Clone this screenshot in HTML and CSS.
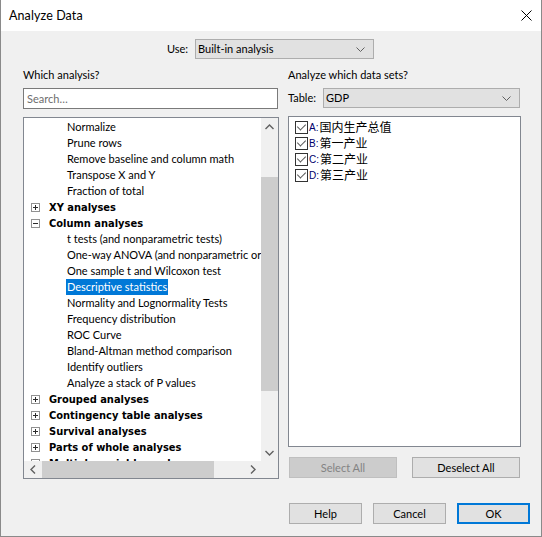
FILE: index.html
```html
<!DOCTYPE html>
<html>
<head>
<meta charset="utf-8">
<link rel="stylesheet" href="styles.css">
</head>
<body>
<div class="window">
  <div class="titlebar">
    <span class="title">Analyze Data</span>
    <span class="close"><svg width="11" height="11" viewBox="0 0 11 11"><path d="M0.5 0.5L10.5 10.5M10.5 0.5L0.5 10.5" stroke="#000" stroke-width="1"/></svg></span>
  </div>
  <div class="content">
    <div class="use-row">
      <span class="lbl">Use:</span>
      <div class="combo combo-use"><span>Built-in analysis</span><svg class="chev" width="9" height="5" viewBox="0 0 9 5"><path d="M0.5 0.5L4.5 4.5L8.5 0.5" fill="none" stroke="#606060"/></svg></div>
    </div>
    <div class="columns">
      <div class="col-left">
        <div class="lbl head">Which analysis?</div>
        <div class="search">Search…</div>
        <div class="tree-box">
          <div class="tree">
            <div class="row child"><span>Normalize</span></div>
            <div class="row child"><span>Prune rows</span></div>
            <div class="row child"><span>Remove baseline and column math</span></div>
            <div class="row child"><span>Transpose X and Y</span></div>
            <div class="row child"><span>Fraction of total</span></div>
            <div class="row parent"><i class="pm plus"></i><b>XY analyses</b></div>
            <div class="row parent"><i class="pm minus"></i><b>Column analyses</b></div>
            <div class="row child"><span>t tests (and nonparametric tests)</span></div>
            <div class="row child"><span>One-way ANOVA (and nonparametric or</span></div>
            <div class="row child"><span>One sample t and Wilcoxon test</span></div>
            <div class="row child"><span class="sel">Descriptive statistics</span></div>
            <div class="row child"><span>Normality and Lognormality Tests</span></div>
            <div class="row child"><span>Frequency distribution</span></div>
            <div class="row child"><span>ROC Curve</span></div>
            <div class="row child"><span>Bland-Altman method comparison</span></div>
            <div class="row child"><span>Identify outliers</span></div>
            <div class="row child"><span>Analyze a stack of P values</span></div>
            <div class="row parent"><i class="pm plus"></i><b>Grouped analyses</b></div>
            <div class="row parent"><i class="pm plus"></i><b>Contingency table analyses</b></div>
            <div class="row parent"><i class="pm plus"></i><b>Survival analyses</b></div>
            <div class="row parent"><i class="pm plus"></i><b>Parts of whole analyses</b></div>
            <div class="row parent"><i class="pm plus"></i><b>Multiple variable analyses</b></div>
          </div>
          <div class="vscroll">
            <div class="sbtn"><svg width="9" height="6" viewBox="0 0 9 6"><path d="M0.5 5L4.5 1L8.5 5" fill="none" stroke="#606060" stroke-width="1.4"/></svg></div>
            <div class="vthumb"></div>
            <div class="spacer"></div>
            <div class="sbtn"><svg width="9" height="6" viewBox="0 0 9 6"><path d="M0.5 1L4.5 5L8.5 1" fill="none" stroke="#606060" stroke-width="1.4"/></svg></div>
          </div>
          <div class="hscroll">
            <div class="sbtn"><svg width="6" height="9" viewBox="0 0 6 9"><path d="M5 0.5L1 4.5L5 8.5" fill="none" stroke="#606060" stroke-width="1.4"/></svg></div>
            <div class="hthumb"></div>
            <div class="spacer"></div>
            <div class="sbtn"><svg width="6" height="9" viewBox="0 0 6 9"><path d="M1 0.5L5 4.5L1 8.5" fill="none" stroke="#606060" stroke-width="1.4"/></svg></div>
          </div>
          <div class="corner"></div>
        </div>
      </div>
      <div class="col-right">
        <div class="lbl head">Analyze which data sets?</div>
        <div class="table-row">
          <span class="lbl tlbl">Table:</span>
          <div class="combo combo-table"><span>GDP</span><svg class="chev" width="9" height="5" viewBox="0 0 9 5"><path d="M0.5 0.5L4.5 4.5L8.5 0.5" fill="none" stroke="#606060"/></svg></div>
        </div>
        <div class="data-box">
          <div class="drow"><i class="cb"></i><span class="key">A:</span><span class="zh">国内生产总值</span></div>
          <div class="drow"><i class="cb"></i><span class="key">B:</span><span class="zh">第一产业</span></div>
          <div class="drow"><i class="cb"></i><span class="key">C:</span><span class="zh">第二产业</span></div>
          <div class="drow"><i class="cb"></i><span class="key">D:</span><span class="zh">第三产业</span></div>
        </div>
        <div class="sel-buttons">
          <div class="btn disabled">Select All</div>
          <div class="btn">Deselect All</div>
        </div>
      </div>
    </div>
    <div class="footer">
      <div class="btn small">Help</div>
      <div class="btn small">Cancel</div>
      <div class="btn small default">OK</div>
    </div>
  </div>
</div>
</body>
</html>
```

FILE: styles.css
```css
* { box-sizing: border-box; }
html, body { margin: 0; padding: 0; }
body { font-family: Lato, "Noto Sans", "Liberation Sans", sans-serif; font-size: 11px; color: #000; }

.window {
  width: 542px; height: 537px;
  border: 1px solid #8a8a8a; border-top: none;
  background: #f0f0f0;
  display: flex; flex-direction: column;
}
.titlebar {
  height: 31px; background: #fff;
  display: flex; align-items: center; justify-content: space-between;
  padding: 0 9px 0 8px;
}
.title { font-size: 12.5px; letter-spacing: 0.1px; }
.close { display: flex; width: 11px; height: 11px; }

.content { flex: 1; display: flex; flex-direction: column; padding: 0 11px 0 22px; }
.lbl { line-height: 16px; white-space: nowrap; }

.use-row { display: flex; align-items: center; justify-content: center; gap: 7px; margin-top: 8px; margin-left: -12px; }
.combo {
  height: 20px; background: #e1e1e1; border: 1px solid #adadad;
  display: flex; align-items: center; justify-content: space-between;
  padding: 0 8px 0 2px; line-height: 16px;
}
.combo-use { width: 179px; }
.combo-table { width: 197px; flex: none; }
.chev { flex: none; }

.columns { display: flex; gap: 9px; margin-top: 8px; }
.col-left { width: 256px; display: flex; flex-direction: column; }
.col-right { width: 233px; display: flex; flex-direction: column; }
.head { height: 21px; }

.search {
  height: 21px; background: #fff; border: 1px solid #7a7a7a;
  padding: 0 3px; line-height: 19px; color: #6d6d6d; width: 255px;
}

.tree-box {
  margin-top: 8px; width: 256px; height: 362px;
  border: 1px solid #828790; background: #fff;
  display: grid; grid-template-columns: 1fr 17px; grid-template-rows: 1fr 17px;
}
.tree { overflow: hidden; padding-top: 1px; }
.row { height: 16px; display: flex; align-items: center; white-space: nowrap; }
.row.child { padding-left: 42px; }
.row.child span { padding: 0 1px; line-height: 16px; }
.row .sel { background: #0078d7; color: #fff; }
.row.parent { padding-left: 7px; }
.row.parent b { font-family: "DejaVu Sans Condensed", "DejaVu Sans", sans-serif; font-stretch: condensed; font-weight: bold; font-size: 11px; margin-left: 9px; }
.pm { display: block; width: 9px; height: 9px; border: 1px solid #919191; position: relative; flex: none; }
.pm::before { content: ""; position: absolute; left: 1px; top: 3px; width: 5px; height: 1px; background: #2b2b2b; }
.pm.plus::after { content: ""; position: absolute; left: 3px; top: 1px; width: 1px; height: 5px; background: #2b2b2b; }

.vscroll { background: #f0f0f0; display: flex; flex-direction: column; }
.hscroll { background: #f0f0f0; display: flex; }
.corner { background: #f0f0f0; }
.sbtn { width: 17px; height: 17px; flex: none; display: flex; align-items: center; justify-content: center; }
.vthumb { width: 17px; height: 214px; margin-top: 42px; background: #cdcdcd; flex: none; }
.hthumb { height: 17px; width: 172px; margin-left: 1px; background: #cdcdcd; flex: none; }
.spacer { flex: 1; }

.table-row { display: flex; align-items: center; }
.tlbl { width: 35px; }
.data-box {
  margin-top: 8px; width: 233px; height: 331px;
  border: 1px solid #828790; background: #fff; padding: 2px 0 0 6px;
}
.drow { height: 16px; display: flex; align-items: center; white-space: nowrap; }
.cb { display: block; width: 13px; height: 13px; border: 1px solid #333; background: #fff; position: relative; flex: none; margin-right: 1px; }
.cb::after { content: ""; position: absolute; left: 3px; top: 0px; width: 4px; height: 7px; border-right: 1.5px solid #555; border-bottom: 1.5px solid #555; transform: rotate(45deg); }
.key { font-family: "Liberation Sans", sans-serif; font-size: 10px; color: #00006a; }
.zh { font-family: "Noto Sans CJK SC", sans-serif; font-size: 12px; line-height: 16px; margin-left: 1px; }

.sel-buttons { display: flex; gap: 15px; margin-top: 10px; padding-left: 1px; }
.btn {
  height: 21px; width: 108px; background: #e1e1e1; border: 1px solid #adadad;
  display: flex; align-items: center; justify-content: center; line-height: 16px;
}
.btn.disabled { background: #cccccc; border-color: #bfbfbf; color: #838383; }
.footer { display: flex; justify-content: flex-end; gap: 11px; margin-top: 24px; }
.btn.small { width: 73px; }
.btn.default { border: 2px solid #0078d7; }
```
